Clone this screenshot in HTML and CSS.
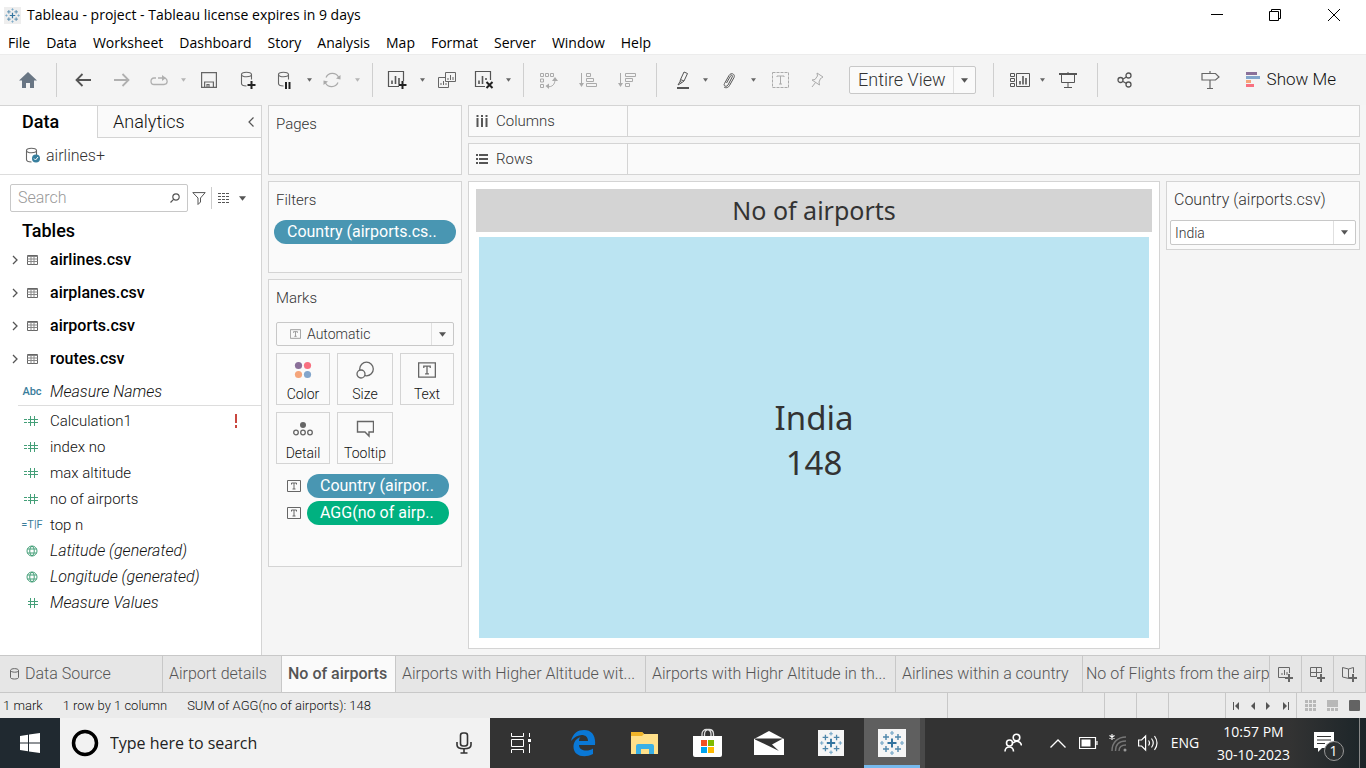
FILE: index.html
```html
<!DOCTYPE html>
<html lang="en">
<head>
<meta charset="utf-8">
<title>Tableau - project</title>
<link rel="stylesheet" href="styles.css">
</head>
<body>
<svg class="defs" aria-hidden="true">
  <symbol id="caret" viewBox="0 0 6 4"><path d="M0 0h6L3 4z" fill="currentColor"/></symbol>
  <symbol id="chev" viewBox="0 0 6 10"><path d="M1 1l4 4-4 4" fill="none" stroke="#555" stroke-width="1.3"/></symbol>
  <symbol id="logo" viewBox="0 0 28 28">
    <path d="M14 9.500v9M9.500 14h9" stroke="#34749f" stroke-width="2"/>
    <path d="M8 5v6M5 8h6M20 5v6M17 8h6M8 17v6M5 20h6M20 17v6M17 20h6" stroke="#4e86aa" stroke-width="1.400"/>
    <path d="M14 2v4M12 4h4M14 22v4M12 24h4M4 12v4M2 14h4M24 12v4M22 14h4" stroke="#72a5c6" stroke-width="1.200"/>
  </symbol>
  <symbol id="grid" viewBox="0 0 11 10"><path d="M.5.500h10v9H.5z" fill="none" stroke="#666"/><path d="M.5 1.500h10M.5 4h10M.5 6.500h10M4 2v7.500M7 2v7.500" fill="none" stroke="#888"/></symbol>
  <symbol id="tbox" viewBox="0 0 14 12"><path d="M.5.500h13v11H.5z" fill="none" stroke="currentColor"/><path d="M4.500 4.500V3h5v1.500M7 3v6M5.500 9h3" fill="none" stroke="currentColor"/></symbol>
  <symbol id="hash" viewBox="0 0 16 12"><path d="M6.500 1v10M10.500 1v10M4 4.500h10M4 7.500h10" stroke="#449f78" fill="none"/></symbol>
  <symbol id="calc" viewBox="0 0 16 12"><path d="M6.500 1v10M10.500 1v10M4 4.500h10M4 7.500h10M0 4.500h3M0 7.500h3" stroke="#449f78" fill="none"/></symbol>
  <symbol id="globe" viewBox="0 0 12 12"><path d="M6 1a5 5 0 1 0 0 10A5 5 0 1 0 6 1M1.500 4h9M1.500 8h9M6 1c-3 2-3 8 0 10c3-2 3-8 0-10" stroke="#449f78" fill="none"/></symbol>
  <symbol id="cyl" viewBox="0 0 16 18"><path d="M1.500 3.500c0-3 10-3 10 0s-10 3-10 0v9c0 1.500 2 2.500 5 2.500M11.500 3.500v5" fill="none" stroke="#666" stroke-width="1.100"/></symbol>
</svg>

<header class="titlebar">
  <svg class="app-icon" viewBox="0 0 28 28"><path d="M0 0h28v28H0z" fill="#eeeeee"/><use href="#logo"/></svg>
  <h1>Tableau - project - Tableau license expires in 9 days</h1>
  <div class="window-buttons">
    <button aria-label="Minimize"><svg width="12" height="12"><path d="M0 5.500h12" stroke="#000"/></svg></button>
    <button aria-label="Restore"><svg width="12" height="12" fill="none" stroke="#000"><path d="M.5 2.500h9v9h-9zM2.500 2.500v-2h9v9h-2"/></svg></button>
    <button aria-label="Close"><svg width="12" height="12"><path d="M0 0l12 12M12 0L0 12" stroke="#000"/></svg></button>
  </div>
</header>
<nav class="menubar" aria-label="Menu">
  <button>File</button><button>Data</button><button>Worksheet</button><button>Dashboard</button><button>Story</button><button>Analysis</button><button>Map</button><button>Format</button><button>Server</button><button>Window</button><button>Help</button>
</nav>

<div class="toolbar" role="toolbar">
  <div class="tools tools-home">
    <button aria-label="Start page"><svg width="18" height="16"><path d="M9 0l9 8.500h-3V16h-4v-5H7v5H3V8.500H0z" fill="#697684"/></svg></button>
  </div>
  <div class="tools tools-file">
    <button aria-label="Undo"><svg width="16" height="14" fill="none" stroke="#555" stroke-width="1.800"><path d="M16 7H1M7.500 1L1.500 7l6 6"/></svg></button>
    <button aria-label="Redo" disabled><svg width="16" height="14" fill="none" stroke="#b0b0b0" stroke-width="1.800"><path d="M0 7h15M8.500 1l6 6-6 6"/></svg></button>
    <button aria-label="Replay" disabled><svg width="18" height="11" fill="none" stroke="#b0b0b0" stroke-width="1.300"><path d="M6 3H4C0 3 0 9.500 4 9.500h10c4 0 4-5 1-6.500M8 3h6"/><path d="M12 0l4 3-4 3z" fill="#b0b0b0" stroke="none"/></svg></button>
    <button aria-label="Replay options" class="pale" disabled><svg width="5" height="4"><use href="#caret"/></svg></button>
    <button aria-label="Save"><svg width="16" height="16" fill="none" stroke="#666" stroke-width="1.200"><path d="M.6.600h14.800v14.800H.6zM3.600 15v-5h8.800v5M6 15v-2.500h2V15"/></svg></button>
    <button aria-label="New data source"><svg width="16" height="18"><use href="#cyl"/><path d="M11.500 10v8M7.500 14h8" stroke="#222" stroke-width="2"/></svg></button>
    <button aria-label="Pause updates"><svg width="16" height="18"><use href="#cyl"/><path d="M9 11v7M12.500 11v7" stroke="#222" stroke-width="2"/></svg></button>
    <button aria-label="Pause options"><svg width="5" height="4"><use href="#caret"/></svg></button>
    <button aria-label="Refresh" disabled><svg width="18" height="16" fill="none" stroke="#aaa" stroke-width="1.200"><path d="M3 5.500a7 7 0 0 1 12.500-.5M15 10.500A7 7 0 0 1 2.500 11"/><path d="M17.500 3v4.500L13 6.500zM.5 13V8.500L5 9.500z" fill="#aaa" stroke="none"/></svg></button>
    <button aria-label="Refresh options" class="pale" disabled><svg width="5" height="4"><use href="#caret"/></svg></button>
  </div>
  <div class="tools tools-sheet">
    <button aria-label="New worksheet"><svg width="20" height="18" fill="none" stroke="#555"><path d="M12 15.500H1.500v-15h15V10" stroke-width="1.200"/><path d="M5 13V9.500M8.500 13V5M12 13V7" stroke-width="1.600"/><path d="M15.500 10v8M11.500 14h8" stroke="#222" stroke-width="2"/></svg></button>
    <button aria-label="Worksheet options"><svg width="5" height="4"><use href="#caret"/></svg></button>
    <button aria-label="Duplicate"><svg width="18" height="16" fill="none" stroke="#666"><path d="M7.500.500h10v9h-10zM7 5.500H.5v10h10V10M10 8V6M12.500 8V3M15 8V5M3 13v-2M5.500 13V9M8 13v-2"/></svg></button>
    <button aria-label="Clear sheet"><svg width="20" height="18" fill="none" stroke="#555"><path d="M11 15.500H1.500v-15h15V9" stroke-width="1.200"/><path d="M5 13V9.500M8.500 13V5M12 9V7" stroke-width="1.600"/><path d="M12.500 11l6 6M18.500 11l-6 6" stroke="#222" stroke-width="2"/></svg></button>
    <button aria-label="Clear options"><svg width="5" height="4"><use href="#caret"/></svg></button>
  </div>
  <div class="tools tools-sort">
    <button aria-label="Swap rows and columns" disabled><svg width="18" height="17" fill="none" stroke="#aaa"><path d="M.5 1.500h3v3h-3zM5.500 1.500h3v3h-3zM10.500 1.500h3v3h-3zM.5 7h3v3h-3zM.5 12.500h3v3h-3zM7 14.500c5 1 8-2 8-7" /><path d="M12 9l3-4 3 4zM9 11.500L5.500 14 9 17z" fill="#aaa" stroke="none"/></svg></button>
    <button aria-label="Sort ascending" disabled><svg width="18" height="15" fill="none" stroke="#aaa"><path d="M2.500 0v12M7.500.500h4v3h-4zM7.500 5.500h7v3h-7zM7.500 10.500h10v3h-10z"/><path d="M0 10h5l-2.500 4z" fill="#aaa" stroke="none"/></svg></button>
    <button aria-label="Sort descending" disabled><svg width="18" height="15" fill="none" stroke="#aaa"><path d="M2.500 0v12M7.500.500h10v3h-10zM7.500 5.500h7v3h-7zM7.500 10.500h4v3h-4z"/><path d="M0 10h5l-2.500 4z" fill="#aaa" stroke="none"/></svg></button>
  </div>
  <div class="tools tools-format">
    <button aria-label="Highlight"><svg width="14" height="18" fill="none" stroke="#555"><path d="M4.500 8.500L8 1l3.500 1.500L8 10l-2 1.500-2-1zM4.500 8.500L8 10M4 10.500L2 14l4-2.500"/><path d="M1 17h12" stroke-width="2"/></svg></button>
    <button aria-label="Highlight options"><svg width="5" height="4"><use href="#caret"/></svg></button>
    <button aria-label="Group members"><svg width="14" height="17" fill="none" stroke="#555"><path d="M4.500 11l4-7c1-1.500 2.500-.5 1.800.8L6 13c-1.500 2.500-5 1-3.500-1.500L7 3.500C9 0 13.500 2 12 5.500l-4.500 8C6.500 15.500 4 16.500 2 15"/></svg></button>
    <button aria-label="Group options"><svg width="5" height="4"><use href="#caret"/></svg></button>
    <button aria-label="Show mark labels" disabled><svg width="17" height="16" fill="none" stroke="#aaa"><path d="M.5.500h16v15H.5z" stroke-dasharray="3 1"/><path d="M5 5V4h7v1M8.500 4v8M7 12h3"/></svg></button>
    <button aria-label="Fix axes" disabled><svg width="13" height="16" fill="none" stroke="#aaa"><path d="M6 1l6 4-1.500 1-1 .5L8 10l.5 3L1 8l3-.5L6.500 4zM4.500 10.500L1 15"/></svg></button>
    <div class="select-wrap fit"><select aria-label="Fit"><option>Entire View</option></select><svg width="7" height="5"><use href="#caret"/></svg></div>
  </div>
  <div class="tools tools-view">
    <button aria-label="Show cards"><svg width="20" height="14" fill="none" stroke="#555"><path d="M.5.500h4v3h-4zM.5 5.500h4v3h-4zM.5 10.500h4v3h-4zM6.500.500h13v13h-13z"/><path d="M10 11.500V8M13 11.500V3M16 11.500V5" stroke-width="1.600"/></svg></button>
    <button aria-label="Card options"><svg width="5" height="4"><use href="#caret"/></svg></button>
    <button aria-label="Presentation mode"><svg width="18" height="16" fill="none" stroke="#555"><path d="M9 0v2M2.500 2v8.500h13V2M9 10v5M5 15.500h8"/><path d="M0 2h18" stroke-width="2"/></svg></button>
  </div>
  <div class="tools tools-share">
    <button aria-label="Share"><svg width="15" height="16" fill="none" stroke="#555" stroke-width="1.300"><circle cx="3.500" cy="8" r="2.500"/><circle cx="11.500" cy="3.500" r="2.500"/><circle cx="11.500" cy="12.500" r="2.500"/><path d="M6 7l3.500-2M6 9.500l3.500 2"/></svg></button>
  </div>
  <div class="tools tools-end">
    <button aria-label="Guide"><svg width="19" height="18" fill="none" stroke="#666" stroke-width="1.200"><path d="M1 2.500h13.500L18 6l-3.500 3H1zM9 0v2.500M9 9v8M6 17.500h6"/></svg></button>
    <button class="show-me"><svg width="14" height="15"><path d="M0 0h11v3H0z" fill="#8a7099"/><path d="M0 4h14v3H0z" fill="#82a5cb"/><path d="M0 8h5v3H0z" fill="#f5a57b"/><path d="M0 12h8v3H0z" fill="#f87080"/></svg>Show Me</button>
  </div>
</div>

<main class="workspace">
  <aside class="data-pane">
    <div class="pane-tabs">
      <button class="on">Data</button>
      <button class="analytics">Analytics<svg width="6" height="10" fill="none" stroke="#555" stroke-width="1.200"><path d="M5.500.500L1 5l4.500 4.500"/></svg></button>
    </div>
    <div class="source"><svg width="16" height="18"><use href="#cyl"/><circle cx="11" cy="11.500" r="4" fill="#387f9e"/><path d="M9 11.500l1.500 1.500 2.500-3" stroke="#fff" fill="none"/></svg>airlines+</div>
    <div class="search-row">
      <label class="search"><input type="text" placeholder="Search" aria-label="Search"><svg width="10" height="10" fill="none" stroke="#555" stroke-width="1.200"><circle cx="6" cy="4" r="3.200"/><path d="M3.800 6.200L.5 9.500"/></svg></label>
      <button class="filter" aria-label="Filter"><svg width="14" height="13" fill="none" stroke="#555"><path d="M.8.600h12.400L8.500 6v4L6 12.500V6z"/></svg></button>
      <button class="view-as" aria-label="View options"><svg width="12" height="10"><path d="M0 .5h12M0 3.500h12M0 6.500h12M0 9.500h12" stroke="#555" stroke-dasharray="3 1"/></svg><svg width="7" height="5"><use href="#caret"/></svg></button>
    </div>
    <h2>Tables</h2>
    <ul class="tables">
      <li><svg width="6" height="10"><use href="#chev"/></svg><svg width="11" height="10"><use href="#grid"/></svg>airlines.csv</li>
      <li><svg width="6" height="10"><use href="#chev"/></svg><svg width="11" height="10"><use href="#grid"/></svg>airplanes.csv</li>
      <li><svg width="6" height="10"><use href="#chev"/></svg><svg width="11" height="10"><use href="#grid"/></svg>airports.csv</li>
      <li><svg width="6" height="10"><use href="#chev"/></svg><svg width="11" height="10"><use href="#grid"/></svg>routes.csv</li>
    </ul>
    <ul class="fields dims">
      <li><span class="type">Abc</span><i>Measure Names</i></li>
    </ul>
    <ul class="fields">
      <li><svg width="16" height="12"><use href="#calc"/></svg>Calculation1<svg width="4" height="14"><path d="M0 0h2v9H0zM0 11h2v3H0z" fill="#c9473f"/></svg></li>
      <li><svg width="16" height="12"><use href="#calc"/></svg>index no</li>
      <li><svg width="16" height="12"><use href="#calc"/></svg>max altitude</li>
      <li><svg width="16" height="12"><use href="#calc"/></svg>no of airports</li>
      <li><span class="type thin">=T|F</span>top n</li>
      <li><svg width="12" height="12"><use href="#globe"/></svg><i>Latitude (generated)</i></li>
      <li><svg width="12" height="12"><use href="#globe"/></svg><i>Longitude (generated)</i></li>
      <li><svg width="16" height="12"><use href="#hash"/></svg><i>Measure Values</i></li>
    </ul>
  </aside>

  <div class="cards">
    <section class="card pages"><h3>Pages</h3></section>
    <section class="card filters"><h3>Filters</h3><button class="pill">Country (airports.cs..</button></section>
    <section class="card marks">
      <h3>Marks</h3>
      <div class="select-wrap mark-type"><svg class="lead" width="11" height="10"><use href="#tbox"/></svg><select aria-label="Mark type"><option>Automatic</option></select><svg width="7" height="5"><use href="#caret"/></svg></div>
      <div class="mark-grid">
        <button><svg width="18" height="18"><circle cx="4.500" cy="4.500" r="3.600" fill="#8a7099"/><circle cx="13.500" cy="4.500" r="3.600" fill="#f87080"/><circle cx="4.500" cy="13.500" r="3.600" fill="#f5a57b"/><circle cx="13.500" cy="13.500" r="3.600" fill="#82a5cb"/></svg>Color</button>
        <button><svg width="18" height="18" fill="none" stroke="#666" stroke-width="1.300"><circle cx="10.500" cy="8" r="6.800"/><circle cx="5" cy="13" r="4" fill="#fafafa"/></svg>Size</button>
        <button class="grey"><svg width="18" height="18"><use href="#tbox"/></svg>Text</button>
        <button><svg width="20" height="18" fill="none" stroke="#666" stroke-width="1.300"><circle cx="10" cy="5" r="3" fill="#666" stroke="none"/><circle cx="3" cy="12.500" r="2.300"/><circle cx="10" cy="12.500" r="2.300"/><circle cx="17" cy="12.500" r="2.300"/></svg>Detail</button>
        <button><svg width="18" height="18" fill="none" stroke="#666" stroke-width="1.400"><path d="M1.500 1.500h16v10.500H13v4l-4-4H1.500z"/></svg>Tooltip</button>
      </div>
      <div class="mark-pill"><svg width="14" height="12"><use href="#tbox"/></svg><button class="pill">Country (airpor..</button></div>
      <div class="mark-pill"><svg width="14" height="12"><use href="#tbox"/></svg><button class="pill green">AGG(no of airp..</button></div>
    </section>
  </div>

  <div class="sheet">
    <div class="shelf"><span><svg width="12" height="12"><path d="M1.500 3v9M6 3v9M10.500 3v9M1.500 0v2M6 0v2M10.500 0v2" stroke="#555" stroke-width="2"/></svg>Columns</span></div>
    <div class="shelf"><span><svg width="12" height="10"><path d="M3 1h9M3 5h9M3 9h9M0 1h2M0 5h2M0 9h2" stroke="#555" stroke-width="2"/></svg>Rows</span></div>
    <section class="view">
      <h2>No of airports</h2>
      <div class="viz"><span>India</span><span>148</span></div>
    </section>
    <section class="quick-filter">
      <label for="country">Country (airports.csv)</label>
      <div class="select-wrap country"><select id="country"><option>India</option></select><svg width="7" height="5"><use href="#caret"/></svg></div>
    </section>
  </div>
</main>

<nav class="sheet-tabs" aria-label="Sheets">
  <button class="t-source"><svg width="10" height="12" fill="none" stroke="#666"><path d="M.5 2.500c0-2.500 8-2.500 8 0s-8 2-8 0v7c0 2 8 2 8 0v-7"/></svg>Data Source</button>
  <button>Airport details</button>
  <button class="on">No of airports</button>
  <button>Airports with Higher Altitude wit...</button>
  <button>Airports with Highr Altitude in th...</button>
  <button>Airlines within a country</button>
  <button class="t-last">No of Flights from the airp</button>
  <button class="new" aria-label="New worksheet"><svg width="16" height="15" fill="none" stroke="#666"><path d="M8 10.500H.5v-10h11V6M4 8V6M6.500 8V3M9 8V5"/><path d="M11 7v8M7 11h8" stroke-width="2"/></svg></button>
  <button class="new" aria-label="New dashboard"><svg width="16" height="15" fill="none" stroke="#666"><path d="M7 9.500H.5v-9h11V6M6.500.500v9M.5 5.500h11"/><path d="M11 7v8M7 11h8" stroke-width="2"/></svg></button>
  <button class="new" aria-label="New story"><svg width="16" height="15" fill="none" stroke="#666"><path d="M7 11.500L.5 10V.5L6.500 2v9M6.500 2L11.500.500V6"/><path d="M11 7v8M7 11h8" stroke-width="2"/></svg></button>
</nav>

<footer class="status">
  <p><span>1 mark</span><span>1 row by 1 column</span><span>SUM of AGG(no of airports): 148</span></p>
  <div></div><div></div><div></div><div></div>
  <div class="pager">
    <button aria-label="First"><svg width="7" height="8"><path d="M.5 0v8" stroke="#555"/><path d="M6 0v8L2 4z" fill="#555"/></svg></button>
    <button aria-label="Previous"><svg width="5" height="8"><path d="M4 0v8L0 4z" fill="#555"/></svg></button>
    <button aria-label="Next"><svg width="5" height="8"><path d="M0 0v8l4-4z" fill="#555"/></svg></button>
    <button aria-label="Last"><svg width="7" height="8"><path d="M6.500 0v8" stroke="#555"/><path d="M1 0v8l4-4z" fill="#555"/></svg></button>
  </div>
  <div class="layouts">
    <button aria-label="Sheet sorter"><svg width="12" height="11"><path d="M0 1.500h12M0 5.500h12M0 9.500h12" stroke="#b8b8b8" stroke-width="3" stroke-dasharray="3 1"/></svg></button>
    <button aria-label="Filmstrip"><svg width="12" height="11"><path d="M0 0h11v7H0z" fill="#b8b8b8"/><path d="M0 9.500h12" stroke="#b8b8b8" stroke-width="3" stroke-dasharray="3 1"/></svg></button>
    <button aria-label="Tabs"><svg width="11" height="11"><rect width="11" height="11" rx="1" fill="#636363"/></svg></button>
  </div>
</footer>

<div class="taskbar">
  <button class="start" aria-label="Start"><svg width="20" height="20" fill="#fff"><path d="M0 3l8-1.200v7.700H0zM9 1.600L20 0v9.500H9zM0 10.500h8v7.700L0 17zM9 10.500h11V20L9 18.400z"/></svg></button>
  <label class="task-search"><svg width="28" height="28"><circle cx="14" cy="14" r="11.500" fill="none" stroke="#000" stroke-width="3.500"/></svg><input type="text" placeholder="Type here to search" aria-label="Type here to search"><svg width="16" height="22" fill="none" stroke="#333" stroke-width="1.600"><rect x="4.500" y="1" width="7" height="13" rx="2.500"/><path d="M1 10v3c0 5 14 5 14 0v-3M8 17v4M4.500 21h7"/></svg></label>
  <div class="apps">
    <button aria-label="Task view"><svg width="22" height="20" fill="none" stroke="#fff"><path d="M1.500 0v3.500h12V0M1.500 20v-3.500h12V20M1.500 6.500h12v7h-12zM19.500 0v4M19.500 11v9"/><path d="M18 6h3v3h-3z" fill="#fff" stroke="none"/></svg></button>
    <button aria-label="Edge"><svg width="26" height="28"><path d="M1 12C3 4 8 1 14 1c8 0 12 6 11 15H9c0 6 9 7 14 3.500V25C13 30 3 26 3.500 17 4 11 8 9 10.500 8 9.500 9 9 10.500 9 12h9c0-8-11-8-17 0z" fill="#0a78d6"/></svg></button>
    <button aria-label="File Explorer"><svg width="28" height="24"><path d="M0 1h11l2 2h14v20H0z" fill="#ffe08a"/><path d="M0 1h11l2 2-2 2H0z" fill="#f0b429"/><path d="M5 23v-8q0-2 2-2h14q2 0 2 2v8h-5v-5h-8v5z" fill="#3ab0e6"/></svg></button>
    <button aria-label="Store"><svg width="29" height="30"><path d="M9 9V6c0-6 9-6 9 0v3M11.500 9V6c0-6 9-6 9 0v3" fill="none" stroke="#ddd" stroke-width="1.300"/><path d="M0 8h29v19q0 2-2 2H2q-2 0-2-2z" fill="#fff"/><path d="M8 12h6v6H8z" fill="#f25022"/><path d="M15 12h6v6h-6z" fill="#7fba00"/><path d="M8 19h6v6H8z" fill="#00a4ef"/><path d="M15 19h6v6h-6z" fill="#ffb900"/></svg></button>
    <button aria-label="Mail"><svg width="30" height="24"><path d="M0 8l15-8 15 8v16H0z" fill="#fff"/><path d="M1 7.500h28l-11 6 7 6.500L1 8.500z" fill="#333"/></svg></button>
    <button aria-label="Tableau"><svg width="26" height="26" viewBox="0 0 28 28"><path d="M0 0h28v28H0z" fill="#f5f5f5"/><use href="#logo"/></svg></button>
    <button class="on" aria-label="Tableau project"><svg width="28" height="28"><path d="M0 0h28v28H0z" fill="#f5f5f5"/><use href="#logo"/></svg></button>
  </div>
  <div class="tray">
    <button aria-label="People"><svg width="18" height="20" fill="none" stroke="#fff" stroke-width="1.600"><circle cx="12.500" cy="4.500" r="3.300"/><circle cx="5.500" cy="10" r="3"/><path d="M1 18.500c0-6 8.500-6 8.500 0M9 10c3-3 8-2 8.500 2.500"/></svg></button>
    <button aria-label="Hidden icons"><svg width="16" height="9" fill="none" stroke="#fff" stroke-width="1.300"><path d="M.5 8.500L8 1l7.500 7.500"/></svg></button>
    <button aria-label="Battery"><svg width="19" height="12"><path d="M.5.500h16v11H.5zM18 4v4" fill="none" stroke="#fff" stroke-width="1.200"/><path d="M2.500 2.500h9v7h-9z" fill="#fff"/></svg></button>
    <button aria-label="Network"><svg width="19" height="20" fill="none" stroke="#777" stroke-width="1.400"><path d="M3 18C3 9 9 4 17 4M6.500 18C6.500 12 10 8 17 8M10 18c0-4 3-6 7-6"/><circle cx="16" cy="17" r="1.500" fill="#999" stroke="none"/><path d="M3 1v6M.5 2.500l5 3M5.500 2.500l-5 3" stroke="#fff" stroke-width="1.100"/></svg></button>
    <button aria-label="Volume"><svg width="21" height="18" fill="none" stroke="#fff" stroke-width="1.200"><path d="M.6 6h3l4-4v14l-4-4h-3zM10.500 6.500q2 2.500 0 5M13.500 4.500q3.500 4.500 0 9M16.500 2q5 7 0 14"/></svg></button>
    <button class="lang">ENG</button>
    <button class="clock"><span>10:57 PM</span><span>30-10-2023</span></button>
    <button class="notes" aria-label="Notifications"><svg width="32" height="32"><path d="M1 2h20v16H9l-4 4v-4H1z" fill="#fff"/><path d="M4 6.500h14M4 10h14M4 13.500h8" stroke="#333"/><circle cx="21" cy="21" r="9.500" fill="#2c3031" stroke="#999"/></svg><span>1</span></button>
  </div>
</div>
</body>
</html>
```
FILE: styles.css
```css
* { box-sizing: border-box; }
body {
  margin: 0;
  min-height: 100vh;
  display: flex;
  flex-direction: column;
  background: #f5f5f5;
  color: #333;
  font: 300 15px/20px Roboto, "Open Sans", sans-serif;
}
h1, h2, h3, p, ul { margin: 0; padding: 0; font-weight: inherit; }
ul { list-style: none; }
svg { display: block; flex: none; }
button, input, select {
  margin: 0;
  padding: 0;
  border: 0;
  background: none;
  color: inherit;
  font: inherit;
  appearance: none;
  min-width: 0;
}
input, select { outline: 0; border-radius: 0; }
button { display: flex; align-items: center; justify-content: center; white-space: nowrap; }
.defs { position: absolute; width: 0; height: 0; }

.titlebar, .menubar {
  display: flex;
  align-items: center;
  background: #fff;
  color: #000;
  font: 400 14px/20px "Open Sans", sans-serif;
}
.titlebar { height: 30px; padding: 0 2px 0 4px; gap: 6px; }
.titlebar h1 { font-size: 14px; flex: 1; }
.app-icon { width: 17px; height: 17px; }
.window-buttons { display: flex; }
.window-buttons button { width: 58px; height: 28px; }
.window-buttons button:last-child { width: 60px; }
.menubar { height: 24px; padding: 2px 0 0 8px; gap: 16px; }

.toolbar { display: flex; align-items: center; height: 51px; background: #f4f4f4; border-top: 1px solid #ececec; color: #666; }
.tools { display: grid; align-items: center; height: 34px; border-right: 1px solid #cfcfcf; }
.tools button { height: 34px; }
.tools button.pale { color: #b5b5b5; }
.tools-home { grid-template-columns: 56px; width: 57px; }
.tools-file { grid-template-columns: 40px 38px 36px 12px 40px 38px 36px 12px 34px 16px; padding: 0 7px 0 6px; }
.tools-sheet { grid-template-columns: 38px 12px 38px 36px 12px; padding: 0 9px 0 5px; }
.tools-sort { grid-template-columns: 38px 40px 38px; padding: 0 10px 0 6px; }
.tools-format { grid-template-columns: 32px 12px 36px 12px 42px 32px 16px 127px; padding: 0 17px 0 10px; }
.tools-format .fit { grid-column: 8; }
.tools-view { grid-template-columns: 32px 12px 40px; padding: 0 9px 0 10px; }
.tools-share { grid-template-columns: 52px; border: 0; }
.tools-end { display: flex; margin-left: auto; padding-right: 30px; gap: 26px; border: 0; }
.tools .show-me { gap: 7px; padding-bottom: 2px; font-size: 17px; color: #111; }

.select-wrap { display: grid; grid-template-columns: 1fr 22px; background: #fafafa; border: 1px solid #c8c8c8; border-radius: 2px; align-items: center; }
.select-wrap select { grid-area: 1 / 1 / 2 / 3; height: 100%; padding-left: 8px; }
.select-wrap svg:last-child { grid-area: 1 / 2; justify-self: center; pointer-events: none; color: #555; }
.select-wrap::before { content: ""; grid-area: 1 / 2; align-self: stretch; border-left: 1px solid #e0e0e0; }
.fit { height: 28px; font-size: 18px; color: #333; }

.workspace { flex: 1; display: flex; gap: 6px; padding-right: 6px; }
.data-pane { width: 262px; background: #fff; border-right: 1px solid #d4d4d4; border-top: 1px solid #d4d4d4; color: #111; }
.pane-tabs { display: grid; grid-template-columns: 97px 1fr; height: 32px; font-size: 18px; }
.pane-tabs .on { justify-content: flex-start; padding-left: 22px; font-weight: 500; font-size: 18px; color: #000; }
.pane-tabs .analytics { justify-content: space-between; padding: 0 7px 0 15px; background: #fafafa; border: solid #d4d4d4; border-width: 0 0 1px 1px; }
.source { display: flex; align-items: center; gap: 5px; height: 37px; padding-left: 25px; border-bottom: 1px solid #ddd; font-size: 16px; color: #333; }
.search-row { display: flex; align-items: center; padding: 9px 0 9px 10px; }
.search { display: flex; align-items: center; width: 178px; height: 28px; padding: 0 7px; border: 1px solid #c8c8c8; border-radius: 2px; font-size: 16px; }
.search input { flex: 1; }
.search input::placeholder { color: #999; opacity: 1; }
.filter { padding: 0 5px 0 4px; }
.view-as { gap: 9px; height: 22px; padding-left: 6px; border-left: 1px solid #ccc; color: #555; }
.data-pane h2 { padding: 0 22px 2px; font-size: 18px; font-weight: 500; line-height: 20px; color: #000; }
.tables li { display: grid; grid-template-columns: 15px 23px 1fr; align-items: center; height: 33px; padding-left: 12px; font-size: 16px; font-weight: 500; color: #000; }
.fields li { display: grid; grid-template-columns: 24px 1fr auto; column-gap: 6px; align-items: center; justify-items: start; height: 26px; padding: 0 22px 0 20px; }
.fields li > :first-child { justify-self: center; }
.fields i { font-size: 16px; }
.dims { margin-left: 18px; padding: 4px 0 0; border-bottom: 1px solid #ddd; }
.dims li { padding-left: 2px; }
.dims + .fields { padding-top: 2px; }
.fields .type { font: 500 11px/12px Roboto, sans-serif; color: #3a7d9b; }
.fields .thin { font-weight: 400; }

.cards { display: flex; flex-direction: column; gap: 6px; width: 194px; }
.card { padding: 8px 7px; background: #fafafa; border: 1px solid #d4d4d4; }
.card h3 { font-size: 15px; }
.pages { height: 70px; }
.filters { height: 92px; }
.filters .pill { width: 182px; margin: 10px 0 0 -2px; }
.marks { height: 288px; }
.pill { justify-content: flex-start; height: 24px; padding-left: 13px; border-radius: 12px; background: #4996b2; color: #fff; font-size: 16px; font-weight: 400; }
.green { background: #00b180; }
.mark-type { width: 178px; height: 24px; margin-top: 14px; font-size: 14px; }
.mark-type select { padding-left: 30px; }
.mark-type .lead { grid-area: 1 / 1; margin-left: 13px; color: #888; }
.mark-grid { display: grid; grid-template-columns: 54px 56px 54px; gap: 7px; margin: 7px 0 10px; }
.mark-grid button { flex-direction: column; gap: 6px; height: 52px; padding-top: 6px; border: 1px solid #d4d4d4; font-size: 14px; line-height: 18px; color: #111; }
.mark-grid .grey svg { color: #666; }
.mark-pill { display: flex; align-items: center; gap: 6px; margin: 0 0 3px 11px; color: #666; }
.mark-pill .pill { width: 142px; }

.sheet { flex: 1; display: grid; grid-template-columns: 1fr 194px; grid-template-rows: 32px 32px 1fr; gap: 6px; padding-bottom: 6px; }
.shelf { grid-column: 1 / 3; background: #fafafa; border: 1px solid #d4d4d4; }
.shelf span { display: flex; align-items: center; gap: 8px; width: 159px; height: 30px; padding-left: 7px; border-right: 1px solid #d4d4d4; }
.view { display: flex; flex-direction: column; padding: 7px 7px 10px; background: #fff; border: 1px solid #d4d4d4; color: #333; text-align: center; font-family: "Noto Sans", sans-serif; font-weight: 400; }
.view h2 { padding: 3px 0 4px; background: #d4d4d4; font-size: 25px; line-height: 36px; }
.viz { flex: 1; display: flex; flex-direction: column; justify-content: center; margin: 5px 3px 0; padding-top: 4px; background: #bbe4f2; font-size: 33px; line-height: 45px; }
.quick-filter { align-self: start; padding: 8px 3px 4px; background: #fafafa; border: 1px solid #d4d4d4; }
.quick-filter label { display: block; padding: 0 4px 10px; font-size: 16px; }
.country { height: 25px; background: #fff; font-size: 14px; }
.country select { padding-left: 4px; }

.sheet-tabs { display: grid; grid-template-columns: 163px 119px 114px 250px 250px 187px 1fr 32px 32px 32px; height: 38px; background: #e6e6e6; border: solid #c8c8c8; border-width: 1px 0; font-size: 16px; color: #555; }
.sheet-tabs button { justify-content: flex-start; overflow: hidden; padding-left: 6px; border-right: 1px solid #c8c8c8; }
.sheet-tabs .t-source { gap: 5px; padding-left: 10px; }
.sheet-tabs .t-last { padding-left: 3px; }
.sheet-tabs .on { background: #fafafa; font-weight: 500; }
.sheet-tabs .new { justify-content: center; padding: 0; }

.status { display: grid; grid-template-columns: 1fr 157px 32px 32px 57px 71px 70px; height: 25px; background: #ebebeb; color: #111; font-size: 13px; line-height: 25px; }
.status p { display: flex; gap: 20px; padding-left: 3px; }
.status > div { border-left: 1px solid #c8c8c8; }
.pager, .layouts { display: flex; align-items: center; justify-content: space-between; padding: 0 7px; }
.layouts { padding: 0 6px 0 8px; }

.taskbar { display: flex; height: 50px; background: #333; color: #fff; font: 400 14px/20px "Open Sans", sans-serif; }
.start { width: 60px; background: #202930; }
.task-search { display: flex; align-items: center; gap: 11px; width: 430px; padding: 0 18px 0 11px; background: #f2f2f2; color: #222; font-size: 16px; }
.task-search input { flex: 1; }
.task-search input::placeholder { color: #222; opacity: 1; }
.apps { display: grid; grid-template-columns: repeat(7, 62px); }
.apps .on { margin: 0 4px 0 2px; padding-top: 3px; background: #5f5f5f; border-bottom: 3px solid #76b9ed; box-shadow: 5px 0 #4a4a4a; }
.tray { display: flex; align-items: center; height: 50px; margin-left: auto; padding-right: 6px; background: linear-gradient(90deg, #333 80%, #1c2529); }
.tray button { width: 30px; height: 50px; }
.tray button:first-child { width: 60px; }
.tray .lang { width: 44px; }
.tray .clock { width: 93px; flex-direction: column; line-height: 23px; }
.tray .notes { display: grid; place-items: center; width: 60px; padding: 6px 2px 0 0; border-right: 1px solid #888; }
.notes svg, .notes span { grid-area: 1 / 1; }
.notes span { padding: 10px 0 0 10px; }
```
